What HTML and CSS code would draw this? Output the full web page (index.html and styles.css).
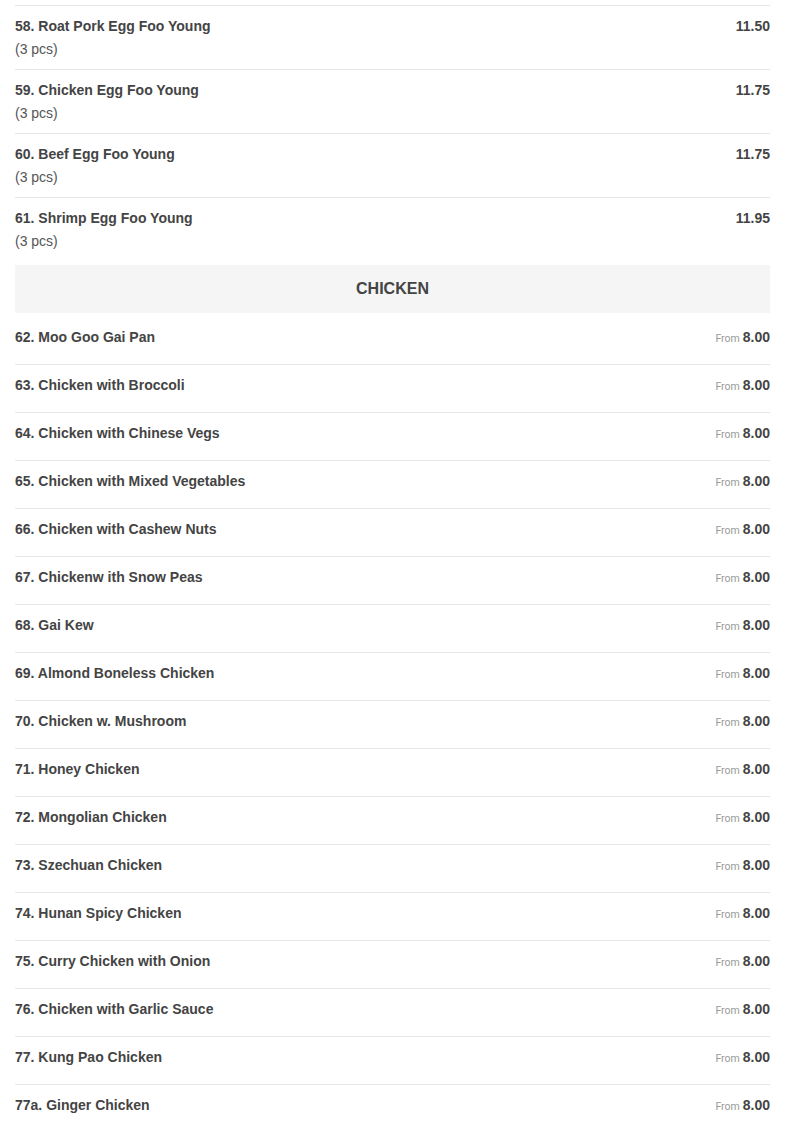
FILE: index.html
```html
<!DOCTYPE html>
<html>
<head>
<meta charset="utf-8">
<link rel="stylesheet" href="styles.css">
</head>
<body>
<div class="menu">
  <div class="section egg">
    <div class="item"><div class="info"><div class="name">58. Roat Pork Egg Foo Young</div><div class="desc">(3 pcs)</div></div><div class="price">11.50</div></div>
    <div class="item"><div class="info"><div class="name">59. Chicken Egg Foo Young</div><div class="desc">(3 pcs)</div></div><div class="price">11.75</div></div>
    <div class="item"><div class="info"><div class="name">60. Beef Egg Foo Young</div><div class="desc">(3 pcs)</div></div><div class="price">11.75</div></div>
    <div class="item"><div class="info"><div class="name">61. Shrimp Egg Foo Young</div><div class="desc">(3 pcs)</div></div><div class="price">11.95</div></div>
  </div>
  <div class="cat">CHICKEN</div>
  <div class="section chicken">
    <div class="item"><div class="name">62. Moo Goo Gai Pan</div><div class="price"><span class="from">From</span><span class="amt">8.00</span></div></div>
    <div class="item"><div class="name">63. Chicken with Broccoli</div><div class="price"><span class="from">From</span><span class="amt">8.00</span></div></div>
    <div class="item"><div class="name">64. Chicken with Chinese Vegs</div><div class="price"><span class="from">From</span><span class="amt">8.00</span></div></div>
    <div class="item"><div class="name">65. Chicken with Mixed Vegetables</div><div class="price"><span class="from">From</span><span class="amt">8.00</span></div></div>
    <div class="item"><div class="name">66. Chicken with Cashew Nuts</div><div class="price"><span class="from">From</span><span class="amt">8.00</span></div></div>
    <div class="item"><div class="name">67. Chickenw ith Snow Peas</div><div class="price"><span class="from">From</span><span class="amt">8.00</span></div></div>
    <div class="item"><div class="name">68. Gai Kew</div><div class="price"><span class="from">From</span><span class="amt">8.00</span></div></div>
    <div class="item"><div class="name">69. Almond Boneless Chicken</div><div class="price"><span class="from">From</span><span class="amt">8.00</span></div></div>
    <div class="item"><div class="name">70. Chicken w. Mushroom</div><div class="price"><span class="from">From</span><span class="amt">8.00</span></div></div>
    <div class="item"><div class="name">71. Honey Chicken</div><div class="price"><span class="from">From</span><span class="amt">8.00</span></div></div>
    <div class="item"><div class="name">72. Mongolian Chicken</div><div class="price"><span class="from">From</span><span class="amt">8.00</span></div></div>
    <div class="item"><div class="name">73. Szechuan Chicken</div><div class="price"><span class="from">From</span><span class="amt">8.00</span></div></div>
    <div class="item"><div class="name">74. Hunan Spicy Chicken</div><div class="price"><span class="from">From</span><span class="amt">8.00</span></div></div>
    <div class="item"><div class="name">75. Curry Chicken with Onion</div><div class="price"><span class="from">From</span><span class="amt">8.00</span></div></div>
    <div class="item"><div class="name">76. Chicken with Garlic Sauce</div><div class="price"><span class="from">From</span><span class="amt">8.00</span></div></div>
    <div class="item"><div class="name">77. Kung Pao Chicken</div><div class="price"><span class="from">From</span><span class="amt">8.00</span></div></div>
    <div class="item"><div class="name">77a. Ginger Chicken</div><div class="price"><span class="from">From</span><span class="amt">8.00</span></div></div>
  </div>
</div>
</body>
</html>
```

FILE: styles.css
```css
html, body {
  margin: 0;
  padding: 0;
  background: #fff;
}
body {
  font-family: "Liberation Sans", Arial, sans-serif;
  color: #444;
  font-size: 14px;
}
.menu {
  padding: 5px 15px 0;
}
.item {
  display: flex;
  justify-content: space-between;
  align-items: flex-start;
}
.name {
  font-weight: bold;
  line-height: 23px;
  color: #444;
}
.desc {
  line-height: 23px;
  color: #555;
}
.price {
  font-weight: bold;
  line-height: 23px;
  color: #444;
  white-space: nowrap;
}
.egg .item {
  border-top: 1px solid #e6e6e6;
  padding: 9px 0 8px;
}
.cat {
  margin: 4px 0;
  height: 48px;
  background: #f5f5f5;
  display: flex;
  align-items: center;
  justify-content: center;
  font-weight: bold;
  font-size: 16px;
  color: #444;
}
.chicken .item {
  border-bottom: 1px solid #e6e6e6;
  padding: 9px 0 15px;
}
.chicken .item:last-child {
  border-bottom: none;
}
.chicken .price {
  display: flex;
  align-items: baseline;
  gap: 3px;
  height: 23px;
}
.from {
  font-family: Roboto, "Liberation Sans", sans-serif;
  font-weight: normal;
  font-size: 10.5px;
  line-height: 23px;
  color: #999;
}
.amt {
  font-size: 14px;
  line-height: 23px;
}
```
